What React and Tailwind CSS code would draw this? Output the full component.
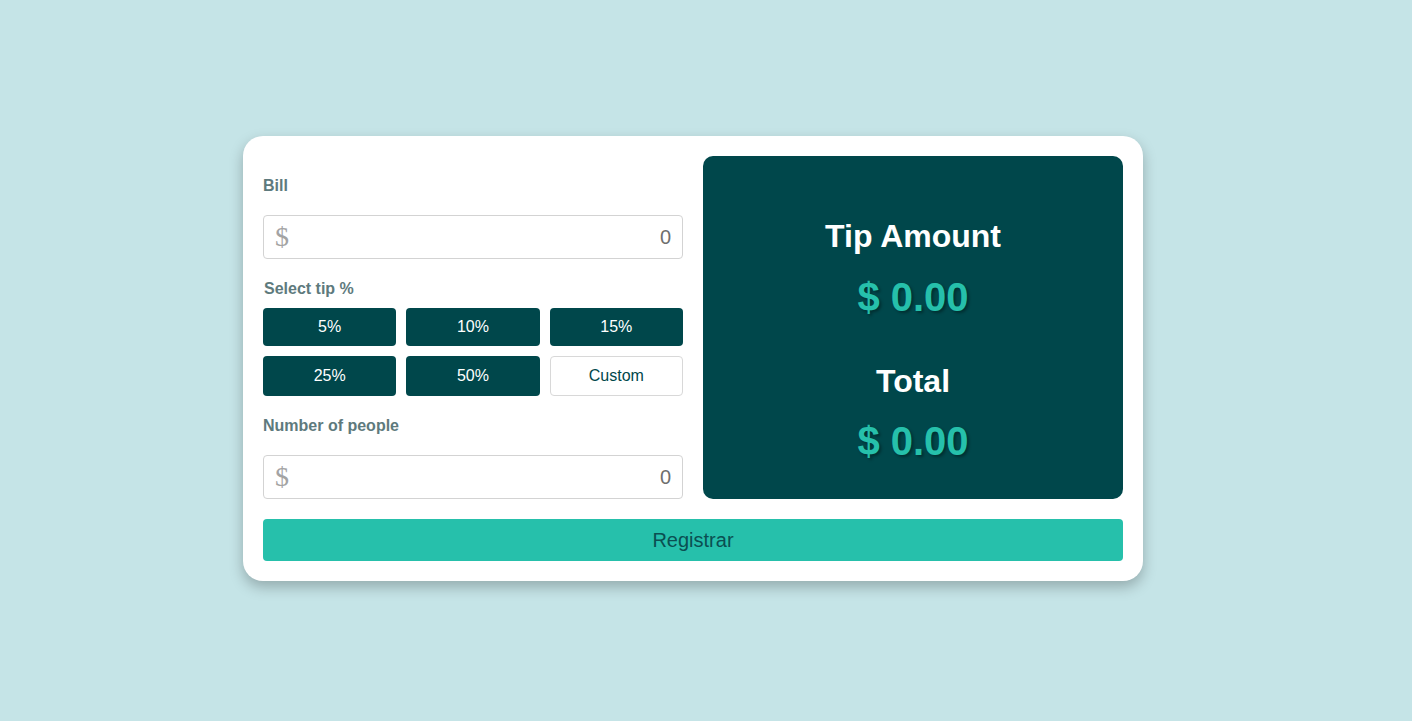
import React from 'react';

const tips = ['5%', '10%', '15%', '25%', '50%'];

function MoneyInput() {
    return (
        <div className="flex items-center justify-between h-[44px] border border-[#d3d3d3] rounded-[4px] bg-white pl-[11px] pr-[11px]">
            <span className="text-[28px] leading-none text-[#a3a3a3] font-['Liberation_Serif']">$</span>
            <span className="text-[20px] leading-none text-[#6f6f6f]">0</span>
        </div>
    );
}

export default function App() {
    return (
        <div className="min-h-screen w-full bg-[#c5e4e7] flex items-center justify-center pr-[26px] pb-[4px] font-['Liberation_Sans',Arial,sans-serif]">
            <div className="w-[900px] bg-white rounded-[20px] p-5 shadow-[0_6px_14px_rgba(0,0,0,0.25)]">
                <div className="flex gap-5">
                    {/* left column */}
                    <div className="w-[420px] flex flex-col">
                        <p className="mt-[22px] text-[16px] leading-none font-bold text-[#5e7a7d]">Bill</p>
                        <div className="mt-[21px]">
                            <MoneyInput />
                        </div>
                        <p className="mt-[22px] ml-px text-[16px] leading-none font-bold text-[#5e7a7d]">Select tip %</p>
                        <div className="mt-[11px] grid grid-cols-3 gap-x-[10px] gap-y-[10px]">
                            {tips.map((t, i) => (
                                <button
                                    key={t}
                                    className={`${i < 3 ? 'h-[38px]' : 'h-[40px]'} rounded-[4px] bg-[#00474b] text-white text-[16px]`}
                                >
                                    {t}
                                </button>
                            ))}
                            <button className="h-[40px] rounded-[4px] bg-white border border-[#d8d8d8] text-[#00474b] text-[16px]">
                                Custom
                            </button>
                        </div>
                        <p className="mt-[22px] text-[16px] leading-none font-bold text-[#5e7a7d]">Number of people</p>
                        <div className="mt-[21px]">
                            <MoneyInput />
                        </div>
                    </div>

                    {/* results panel */}
                    <div className="w-[420px] bg-[#00474b] rounded-[10px] flex flex-col items-center pt-[64px] pb-[37px]">
                        <p className="text-[32px] leading-none font-bold text-white">Tip Amount</p>
                        <p className="mt-[25px] text-[40px] leading-none font-bold text-[#26c0ab] [text-shadow:2px_2px_3px_rgba(0,0,0,0.35)]">$ 0.00</p>
                        <p className="mt-[48px] text-[32px] leading-none font-bold text-white">Total</p>
                        <p className="mt-[24px] text-[40px] leading-none font-bold text-[#26c0ab] [text-shadow:2px_2px_3px_rgba(0,0,0,0.35)]">$ 0.00</p>
                    </div>
                </div>

                <button className="mt-[20px] w-full h-[42px] rounded-[4px] bg-[#26c0ab] text-[20px] text-[#0b4f51]">
                    Registrar
                </button>
            </div>
        </div>
    );
}
